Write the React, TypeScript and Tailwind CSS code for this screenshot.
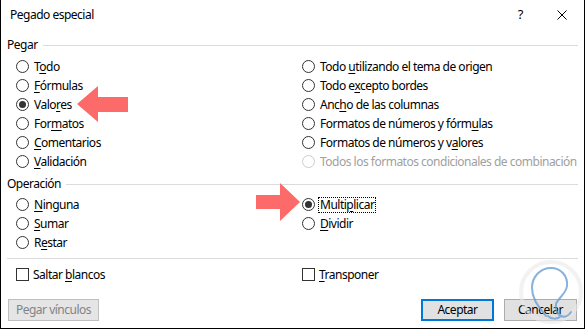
import React from "react";

const FONT = { fontFamily: '"Noto Sans", "Open Sans", sans-serif' };

function Label({ text, u }: { text: string; u: number }) {
  if (u < 0) return <span>{text}</span>;
  return (
    <span>
      {text.slice(0, u)}
      <span className="underline underline-offset-[2px]">{text[u]}</span>
      {text.slice(u + 1)}
    </span>
  );
}

function Radio({
  text,
  u,
  checked = false,
  disabled = false,
  focus = false,
}: {
  text: string;
  u: number;
  checked?: boolean;
  disabled?: boolean;
  focus?: boolean;
}) {
  return (
    <div className="flex h-[19px] items-center whitespace-nowrap">
      <div
        className={`flex h-[13px] w-[13px] shrink-0 items-center justify-center rounded-full border bg-white ${
          disabled ? "border-[#cccccc]" : "border-[#333333]"
        }`}
      >
        {checked && <div className="h-[7px] w-[7px] rounded-full bg-[#333333]" />}
      </div>
      <div
        className={`ml-[3px] px-px leading-[14px] ${
          focus ? "border border-dotted border-black" : "border border-transparent"
        } ${disabled ? "text-[#a0a0a0]" : "text-black"}`}
      >
        <Label text={text} u={u} />
      </div>
    </div>
  );
}

function Check({ text, u }: { text: string; u: number }) {
  return (
    <div className="flex h-[19px] items-center whitespace-nowrap">
      <div className="h-[13px] w-[13px] shrink-0 border border-[#333333] bg-white" />
      <div className="ml-[4px] text-black">
        <Label text={text} u={u} />
      </div>
    </div>
  );
}

function Heading({ text }: { text: string }) {
  return (
    <div className="flex h-[18px] items-center">
      <span className="text-black">{text}</span>
      <div className="ml-[5px] h-px flex-1 bg-[#dcdcdc]" />
    </div>
  );
}

export default function App() {
  return (
    <div
      className="relative h-[330px] w-[586px] bg-white text-[12px] tracking-[-0.5px]"
      style={FONT}
    >
      <div className="flex h-[329px] w-[585px] flex-col border-x border-b border-black bg-white">
        {/* title bar */}
        <div className="flex h-[30px] shrink-0 items-center pl-[9px]">
          <span className="text-black">Pegado especial</span>
          <span className="ml-auto text-[13px] text-black">?</span>
          <svg className="ml-[34px] mr-[17px]" width="10" height="10" viewBox="0 0 10 10">
            <path d="M0.5 0.5 L9.5 9.5 M9.5 0.5 L0.5 9.5" stroke="#000" strokeWidth="1" />
          </svg>
        </div>

        <div className="flex flex-1 flex-col pl-[6px] pr-[6px]">
          <div className="mt-[6px]">
            <Heading text="Pegar" />
          </div>
          <div className="mt-[3px] grid grid-cols-[286px_1fr] pl-[9px]">
            <div className="flex flex-col">
              <Radio text="Todo" u={1} />
              <Radio text="Fórmulas" u={0} />
              <Radio text="Valores" u={4} checked />
              <Radio text="Formatos" u={3} />
              <Radio text="Comentarios" u={0} />
              <Radio text="Validación" u={0} />
            </div>
            <div className="flex flex-col">
              <Radio text="Todo utilizando el tema de origen" u={5} />
              <Radio text="Todo excepto bordes" u={6} />
              <Radio text="Ancho de las columnas" u={3} />
              <Radio text="Formatos de números y fórmulas" u={26} />
              <Radio text="Formatos de números y valores" u={23} />
              <Radio text="Todos los formatos condicionales de combinación" u={-1} disabled />
            </div>
          </div>

          <div className="mt-[4px]">
            <Heading text="Operación" />
          </div>
          <div className="mt-[2px] grid grid-cols-[286px_1fr] pl-[9px]">
            <div className="flex flex-col">
              <Radio text="Ninguna" u={0} />
              <Radio text="Sumar" u={0} />
              <Radio text="Restar" u={1} />
            </div>
            <div className="flex flex-col">
              <Radio text="Multiplicar" u={5} checked focus />
              <Radio text="Dividir" u={0} />
            </div>
          </div>

          <div className="mt-[6px] h-px bg-[#dcdcdc]" />

          <div className="mt-[6px] grid grid-cols-[286px_1fr] pl-[9px]">
            <Check text="Saltar blancos" u={7} />
            <Check text="Transponer" u={0} />
          </div>

          <div className="mt-[15px] flex items-center pl-px pr-[1px]">
            <div className="flex h-[22px] w-[91px] items-center justify-center border border-[#bfbfbf] bg-[#e5e5e5] text-[#838383]">
              Pegar vínculos
            </div>
            <div className="ml-auto flex h-[22px] w-[73px] items-center justify-center border-2 border-[#0078d7] bg-[#e1e1e1] text-black">
              Aceptar
            </div>
            <div className="ml-[10px] flex h-[22px] w-[73px] items-center justify-center border border-[#adadad] bg-[#e1e1e1] text-black">
              Cancelar
            </div>
          </div>
        </div>
      </div>

      {/* red arrows */}
      <svg className="pointer-events-none absolute left-0 top-0" width="586" height="330">
        <polygon points="77,104 98,86 98,97 128,97 128,112 98,112 98,122" fill="#fd6a6a" />
        <polygon points="300,202 280,183 280,195 256,195 256,209 280,209 280,221" fill="#fd6a6a" />
      </svg>

      {/* watermark */}
      <svg className="pointer-events-none absolute left-0 top-0 opacity-80" width="586" height="330">
        <circle cx="551" cy="292" r="30" fill="none" stroke="#e9e9e9" strokeWidth="4" opacity="0.7" />
        <path
          d="M546 316 C540 308 532 300 532 288 C532 276 541 268 551 268 C561 268 568 276 567 286 C566 294 558 298 556 304 C555 309 557 314 561 316 C565 318 569 315 571 312 M561 316 C557 320 551 319 548 316"
          fill="none"
          stroke="#6a9fd4"
          strokeWidth="2"
          strokeLinecap="round"
        />
      </svg>
    </div>
  );
}
